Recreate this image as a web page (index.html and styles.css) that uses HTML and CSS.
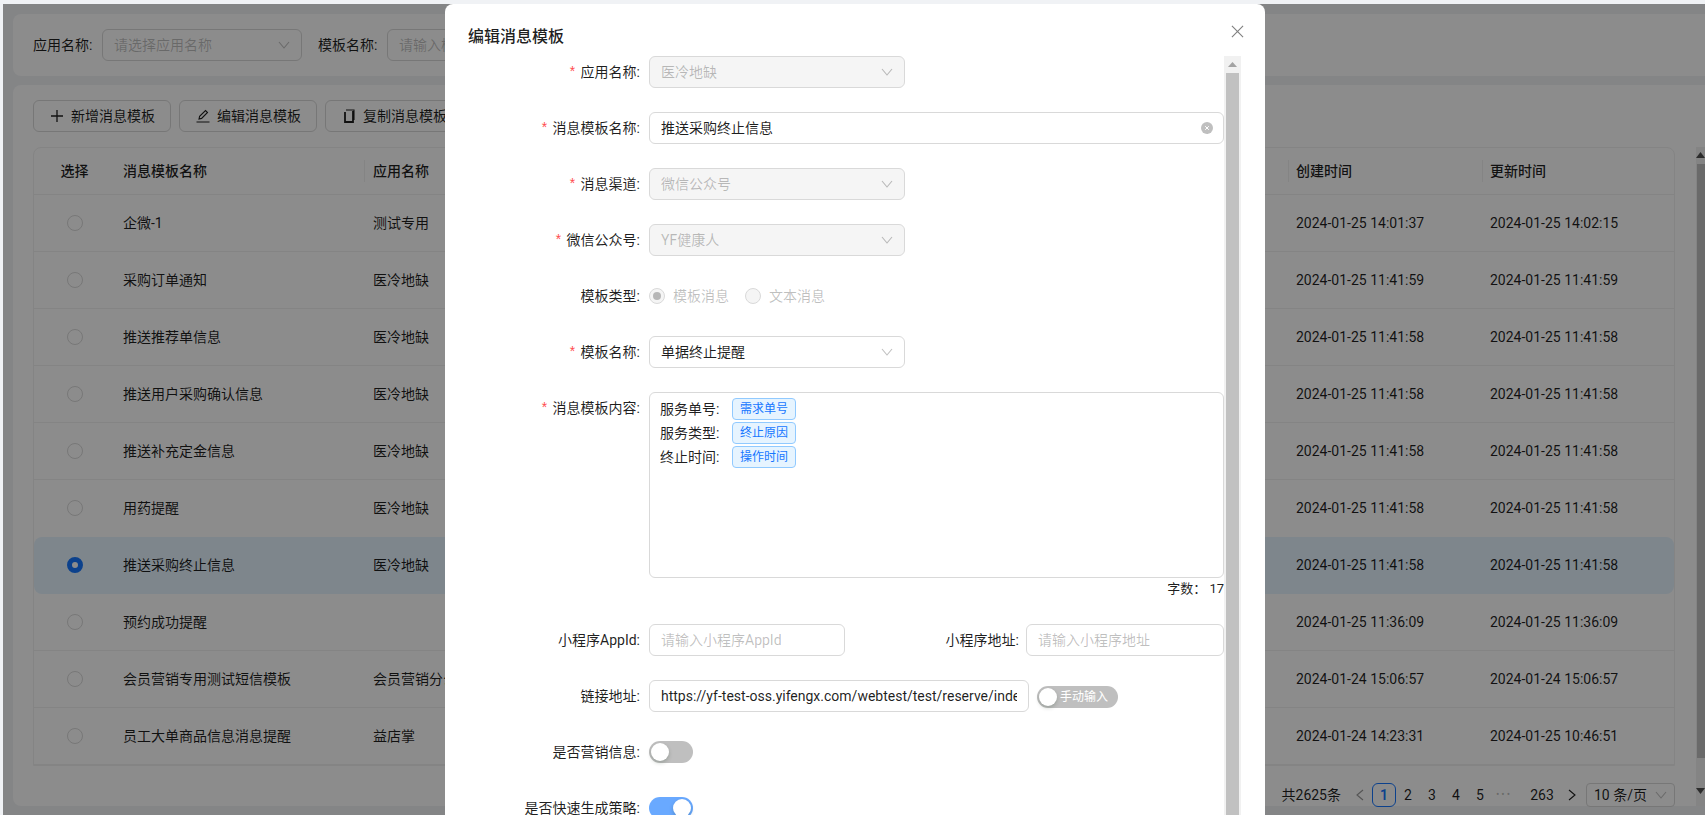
FILE: index.html
```html
<!DOCTYPE html>
<html lang="zh-CN">
<head>
<meta charset="utf-8">
<title>消息模板</title>
<link rel="stylesheet" href="styles.css">
</head>
<body>
<div class="page">
  <section class="card filter-card">
    <span class="f-label">应用名称:</span>
    <div class="field select-f"><span class="ph">请选择应用名称</span>
      <svg class="chev" viewBox="0 0 12 8"><path d="M1 1l5 6 5-6"/></svg></div>
    <span class="f-label f-label-2">模板名称:</span>
    <div class="field input-f"><span class="ph">请输入模板名称</span></div>
  </section>
  <section class="card main-card">
    <div class="toolbar">
      <button class="btn btn-1"><svg class="ic ic-plus" viewBox="0 0 12 12"><path d="M6 0v12M0 6h12"/></svg>新增消息模板</button>
      <button class="btn btn-2"><svg class="ic ic-edit" viewBox="0 0 14 14"><path d="M0.500 13h13M3 10l.6-2.600L9.500 1.500l2 2-5.900 5.900z"/></svg>编辑消息模板</button>
      <button class="btn btn-3"><svg class="ic ic-copy" viewBox="0 0 12 14"><path class="thick" d="M2 3v10h8V2"/><path d="M3 1h8v10"/></svg>复制消息模板</button>
    </div>
    <div class="table">
      <div class="tr th">
        <div class="td td-c">选择</div><div class="td">消息模板名称</div><div class="td sep">应用名称</div><div class="td"></div><div class="td sep">创建时间</div><div class="td sep">更新时间</div>
      </div>
      <div class="tr"><div class="td td-c"><i class="radio"></i></div><div class="td">企微-1</div><div class="td">测试专用</div><div class="td"></div><div class="td">2024-01-25 14:01:37</div><div class="td">2024-01-25 14:02:15</div></div>
      <div class="tr"><div class="td td-c"><i class="radio"></i></div><div class="td">采购订单通知</div><div class="td">医冷地缺</div><div class="td"></div><div class="td">2024-01-25 11:41:59</div><div class="td">2024-01-25 11:41:59</div></div>
      <div class="tr"><div class="td td-c"><i class="radio"></i></div><div class="td">推送推荐单信息</div><div class="td">医冷地缺</div><div class="td"></div><div class="td">2024-01-25 11:41:58</div><div class="td">2024-01-25 11:41:58</div></div>
      <div class="tr"><div class="td td-c"><i class="radio"></i></div><div class="td">推送用户采购确认信息</div><div class="td">医冷地缺</div><div class="td"></div><div class="td">2024-01-25 11:41:58</div><div class="td">2024-01-25 11:41:58</div></div>
      <div class="tr"><div class="td td-c"><i class="radio"></i></div><div class="td">推送补充定金信息</div><div class="td">医冷地缺</div><div class="td"></div><div class="td">2024-01-25 11:41:58</div><div class="td">2024-01-25 11:41:58</div></div>
      <div class="tr before-sel"><div class="td td-c"><i class="radio"></i></div><div class="td">用药提醒</div><div class="td">医冷地缺</div><div class="td"></div><div class="td">2024-01-25 11:41:58</div><div class="td">2024-01-25 11:41:58</div></div>
      <div class="tr selected"><div class="td td-c"><i class="radio radio-on"></i></div><div class="td">推送采购终止信息</div><div class="td">医冷地缺</div><div class="td"></div><div class="td">2024-01-25 11:41:58</div><div class="td">2024-01-25 11:41:58</div></div>
      <div class="tr"><div class="td td-c"><i class="radio"></i></div><div class="td">预约成功提醒</div><div class="td"></div><div class="td"></div><div class="td">2024-01-25 11:36:09</div><div class="td">2024-01-25 11:36:09</div></div>
      <div class="tr"><div class="td td-c"><i class="radio"></i></div><div class="td">会员营销专用测试短信模板</div><div class="td">会员营销分公司</div><div class="td"></div><div class="td">2024-01-24 15:06:57</div><div class="td">2024-01-24 15:06:57</div></div>
      <div class="tr"><div class="td td-c"><i class="radio"></i></div><div class="td">员工大单商品信息消息提醒</div><div class="td">益店掌</div><div class="td"></div><div class="td">2024-01-24 14:23:31</div><div class="td">2024-01-25 10:46:51</div></div>
    </div>
    <div class="pager">
      <span class="total">共2625条</span>
      <span class="pg pg-dim"><svg class="pg-arrow" viewBox="0 0 8 12"><path d="M7 1L1 6l6 5"/></svg></span>
      <span class="pg pg-active">1</span><span class="pg">2</span><span class="pg">3</span><span class="pg">4</span><span class="pg">5</span>
      <span class="pg pg-more">•••</span>
      <span class="pg pg-last">263</span>
      <span class="pg"><svg class="pg-arrow" viewBox="0 0 8 12"><path d="M1 1l6 5-6 5"/></svg></span>
      <div class="size-sel">10 条/页<svg class="chev" viewBox="0 0 12 8"><path d="M1 1l5 6 5-6"/></svg></div>
    </div>
    <div class="page-scroll"><i class="ps-up"></i><i class="ps-thumb"></i><i class="ps-down"></i></div>
  </section>
</div>

<div class="mask"></div>

<div class="modal">
  <div class="modal-title">编辑消息模板</div>
  <svg class="close" viewBox="0 0 14 14"><path d="M1 1l12 12M13 1L1 13"/></svg>
  <div class="modal-body">
    <div class="form">
      <div class="row"><label class="lb"><em>*</em>应用名称:</label>
        <div class="field w256 disabled">医冷地缺<svg class="chev" viewBox="0 0 12 8"><path d="M1 1l5 6 5-6"/></svg></div></div>
      <div class="row"><label class="lb"><em>*</em>消息模板名称:</label>
        <div class="field grow">推送采购终止信息<svg class="clear" viewBox="0 0 12 12"><circle cx="6" cy="6" r="6"/><path d="M4.200 4.200l3.600 3.600M7.800 4.200l-3.600 3.600"/></svg></div></div>
      <div class="row"><label class="lb"><em>*</em>消息渠道:</label>
        <div class="field w256 disabled">微信公众号<svg class="chev" viewBox="0 0 12 8"><path d="M1 1l5 6 5-6"/></svg></div></div>
      <div class="row"><label class="lb"><em>*</em>微信公众号:</label>
        <div class="field w256 disabled">YF健康人<svg class="chev" viewBox="0 0 12 8"><path d="M1 1l5 6 5-6"/></svg></div></div>
      <div class="row"><label class="lb">模板类型:</label>
        <div class="radios">
          <i class="m-radio m-radio-on"></i><span class="r-txt">模板消息</span>
          <i class="m-radio"></i><span class="r-txt">文本消息</span>
        </div></div>
      <div class="row"><label class="lb"><em>*</em>模板名称:</label>
        <div class="field w256">单据终止提醒<svg class="chev" viewBox="0 0 12 8"><path d="M1 1l5 6 5-6"/></svg></div></div>
      <div class="row"><label class="lb"><em>*</em>消息模板内容:</label>
        <div class="grow-col">
          <div class="textarea">
            <div class="t-line"><span class="t-key">服务单号:</span><span class="tag">需求单号</span></div>
            <div class="t-line"><span class="t-key">服务类型:</span><span class="tag">终止原因</span></div>
            <div class="t-line"><span class="t-key">终止时间:</span><span class="tag">操作时间</span></div>
          </div>
          <div class="count">字数： 17</div>
        </div></div>
      <div class="row"><label class="lb">小程序AppId:</label>
        <div class="field w196"><span class="ph">请输入小程序AppId</span></div>
        <label class="lb lb-2">小程序地址:</label>
        <div class="field grow"><span class="ph">请输入小程序地址</span></div></div>
      <div class="row"><label class="lb">链接地址:</label>
        <div class="field w380"><span class="url">https://yf-test-oss.yifengx.com/webtest/test/reserve/index</span></div>
        <div class="switch sw-text"><i class="knob"></i><span>手动输入</span></div></div>
      <div class="row"><label class="lb">是否营销信息:</label>
        <div class="sw-wrap"><div class="switch"><i class="knob"></i></div></div></div>
      <div class="row"><label class="lb">是否快速生成策略:</label>
        <div class="sw-wrap"><div class="switch sw-on"><i class="knob"></i></div></div></div>
    </div>
    <div class="m-scroll"><i class="ms-up"></i><i class="ms-thumb"></i></div>
  </div>
</div>
</body>
</html>
```
FILE: styles.css
```css
* { box-sizing: border-box; }
html, body { margin: 0; height: 815px; overflow: hidden; }
body {
  background: #f0f2f5;
  color: rgba(0,0,0,.88);
  font: 14px/22px Roboto, "Noto Sans CJK SC", sans-serif;
}
.page { padding: 14px 0 0 13px; height: 815px; display: flex; flex-direction: column; gap: 9px; }
.card { background: #fff; border-radius: 8px 0 0 8px; }
.filter-card { height: 62px; display: flex; align-items: center; padding: 0 0 1px 20px; flex: none; }
.f-label { margin-right: 7px; width: 62px; white-space: nowrap; }
.f-label-2 { margin-left: 16px; }
.field {
  height: 32px; border: 1px solid #d9d9d9; border-radius: 6px; padding: 0 11px;
  display: flex; align-items: center; flex: none; background: #fff; position: relative; white-space: nowrap;
}
.ph { color: rgba(0,0,0,.25); }
.select-f { width: 200px; }
.input-f { width: 200px; }
.chev { width: 12px; height: 8px; fill: none; stroke: rgba(0,0,0,.25); stroke-width: 1.100; position: absolute; right: 11px; top: 11px; }

.main-card { height: 721px; flex: none; padding: 15px 0 0 20px; position: relative; border-radius: 8px 0 0 8px; }
.toolbar { display: flex; gap: 8px; height: 32px; }
.btn {
  width: 138px; height: 32px; border: 1px solid #d9d9d9; border-radius: 6px; background: #fff; padding: 0 0 0 17px;
  font: inherit; color: inherit; display: flex; align-items: center; white-space: nowrap; flex: none;
}
.ic { fill: none; stroke: rgba(0,0,0,.88); stroke-width: 1.100; flex: none; }
.ic-plus { width: 12px; height: 12px; margin-right: 8px; stroke-width: 1.300; }
.ic-edit { width: 14px; height: 14px; margin: 0 7px 0 -1px; }
.ic-copy { width: 12px; height: 14px; margin-right: 8px; }
.ic-copy .thick { stroke-width: 1.800; }

.table { margin-top: 15px; width: 1642px; border: 1px solid #f0f0f0; border-radius: 8px 8px 0 0; }
.tr { display: grid; grid-template-columns: 81px 249px 200px 724px 194px 192px; height: 57px; align-items: center; border-bottom: 1px solid #f0f0f0; }
.th { height: 47px; font-weight: 500; border-radius: 8px 8px 0 0; }
.td { padding-left: 8px; white-space: nowrap; overflow: hidden; position: relative; height: 22px; }
.td:nth-child(3) { padding-left: 9px; }
.td-c { padding-left: 0; display: flex; align-items: center; justify-content: center; }
.sep { overflow: visible; }
.sep::before { content: ""; position: absolute; left: 0; top: 0; width: 1px; height: 22px; background: #f0f0f0; }
.before-sel { border-bottom-color: transparent; }
.selected { background: #e6f4ff; border-radius: 8px; border-bottom-color: transparent; }
.radio { width: 16px; height: 16px; border: 1px solid #d9d9d9; border-radius: 50%; background: #fff; display: block; }
.radio-on { border: 5px solid #1677ff; }

.pager { display: flex; align-items: center; height: 24px; margin-top: 17px; width: 1642px; justify-content: flex-end; }
.total { margin-right: 7px; }
.pg { width: 24px; height: 24px; line-height: 22px; text-align: center; border: 1px solid transparent; border-radius: 6px; display: block; flex: none; }
.pg-dim { opacity: .45; }
.pg-arrow { width: 8px; height: 12px; fill: none; stroke: rgba(0,0,0,.88); stroke-width: 1.100; vertical-align: -1px; }
.pg-active { border-color: #1677ff; color: #1677ff; font-weight: 600; }
.pg-more { color: rgba(0,0,0,.25); font-size: 10px; letter-spacing: 2px; white-space: nowrap; }
.pg-last { width: 36px; margin-left: 8px; }
.size-sel { width: 89px; height: 24px; border: 1px solid #d9d9d9; border-radius: 4px; padding-left: 7px; line-height: 22px; margin-left: 2px; position: relative; flex: none; }
.size-sel .chev { right: 7px; top: 7px; }
.page-scroll { position: absolute; right: 0; top: 62px; width: 9px; height: 659px; display: flex; flex-direction: column; background: #f1f1f1; }
.ps-up { height: 17px; clip-path: polygon(50% 30%, 100% 65%, 0 65%); background-color: #505050; }
.ps-thumb { height: 594px; background: #c1c1c1; margin-left: 1px; }
.ps-down { height: 17px; margin-top: auto; margin-bottom: 7px; background-color: #505050; clip-path: polygon(0 35%, 100% 35%, 50% 70%); }

.mask { position: fixed; left: 3px; top: 4px; right: 0; bottom: 0; background: rgba(0,0,0,.45); }

.modal { position: absolute; left: 445px; top: 4px; width: 820px; height: 830px; background: #fff; border-radius: 8px; padding-top: 52px; }
.modal-title { position: absolute; left: 23px; top: 21px; font-size: 16px; line-height: 24px; font-weight: 500; }
.close { position: absolute; left: 786px; top: 21px; width: 13px; height: 13px; fill: none; stroke: rgba(0,0,0,.5); stroke-width: 1.200; }
.modal-body { display: flex; height: 778px; padding-right: 24px; }
.form { flex: 1; min-width: 0; }
.row { display: flex; align-items: flex-start; margin-bottom: 24px; min-height: 32px; }
.lb { width: 195px; height: 32px; text-align: right; line-height: 32px; margin-right: 9px; flex: none; color: rgba(0,0,0,.88); white-space: nowrap; }
.lb em { color: #ff4d4f; font-style: normal; font-family: "Liberation Mono", monospace; line-height: 1; margin-right: 4px; }
.lb-2 { width: 174px; margin-right: 7px; }
.w256 { width: 256px; }
.w196 { width: 196px; }
.w380 { width: 380px; overflow: hidden; }
.grow { flex: 1; min-width: 0; }
.url { overflow: hidden; display: block; min-width: 0; }
.disabled { background: #f5f5f5; color: rgba(0,0,0,.25); }
.clear { width: 12px; height: 12px; position: absolute; right: 10px; top: 9px; }
.clear circle { fill: rgba(0,0,0,.25); }
.clear path { stroke: #fff; stroke-width: 1; fill: none; }
.radios { display: flex; align-items: center; height: 32px; color: rgba(0,0,0,.25); }
.m-radio { width: 16px; height: 16px; border-radius: 50%; border: 1px solid #d9d9d9; background: #f5f5f5; flex: none; position: relative; }
.m-radio-on::after { content: ""; position: absolute; left: 3px; top: 3px; width: 8px; height: 8px; border-radius: 50%; background: rgba(0,0,0,.25); }
.r-txt { margin: 0 16px 0 8px; }
.grow-col { flex: 1; min-width: 0; }
.textarea { height: 186px; border: 1px solid #d9d9d9; border-radius: 6px; padding: 5px 10px; }
.t-line { display: flex; align-items: center; height: 22px; margin-bottom: 2px; }
.t-key { width: 72px; flex: none; }
.tag { width: 64px; height: 22px; background: #e6f4ff; border: 1px solid #91caff; border-radius: 4px; color: #1677ff; font-size: 12px; line-height: 20px; text-align: center; }
.count { text-align: right; height: 22px; white-space: nowrap; font-size: 13px; }
.switch { width: 44px; height: 22px; border-radius: 11px; background: #bfbfbf; position: relative; flex: none; display: block; }
.sw-wrap { height: 32px; display: flex; align-items: center; }
.knob { position: absolute; left: 2px; top: 2px; width: 18px; height: 18px; background: #fff; border-radius: 50%; box-shadow: 0 2px 4px rgba(0,35,11,.2); }
.sw-on { background: #69a9ff; }
.sw-on .knob { left: 24px; }
.sw-text { width: 81px; margin: 6px 0 0 8px; color: #fff; font-size: 12px; line-height: 22px; padding-left: 23px; white-space: nowrap; }
.m-scroll { width: 17px; flex: none; background: #f1f1f1; display: flex; flex-direction: column; padding: 0 2px; }
.ms-up { height: 17px; background: #a3a3a3; clip-path: polygon(50% 35%, 85% 65%, 15% 65%); flex: none; }
.ms-thumb { flex: 1; background: #c1c1c1; }
```
